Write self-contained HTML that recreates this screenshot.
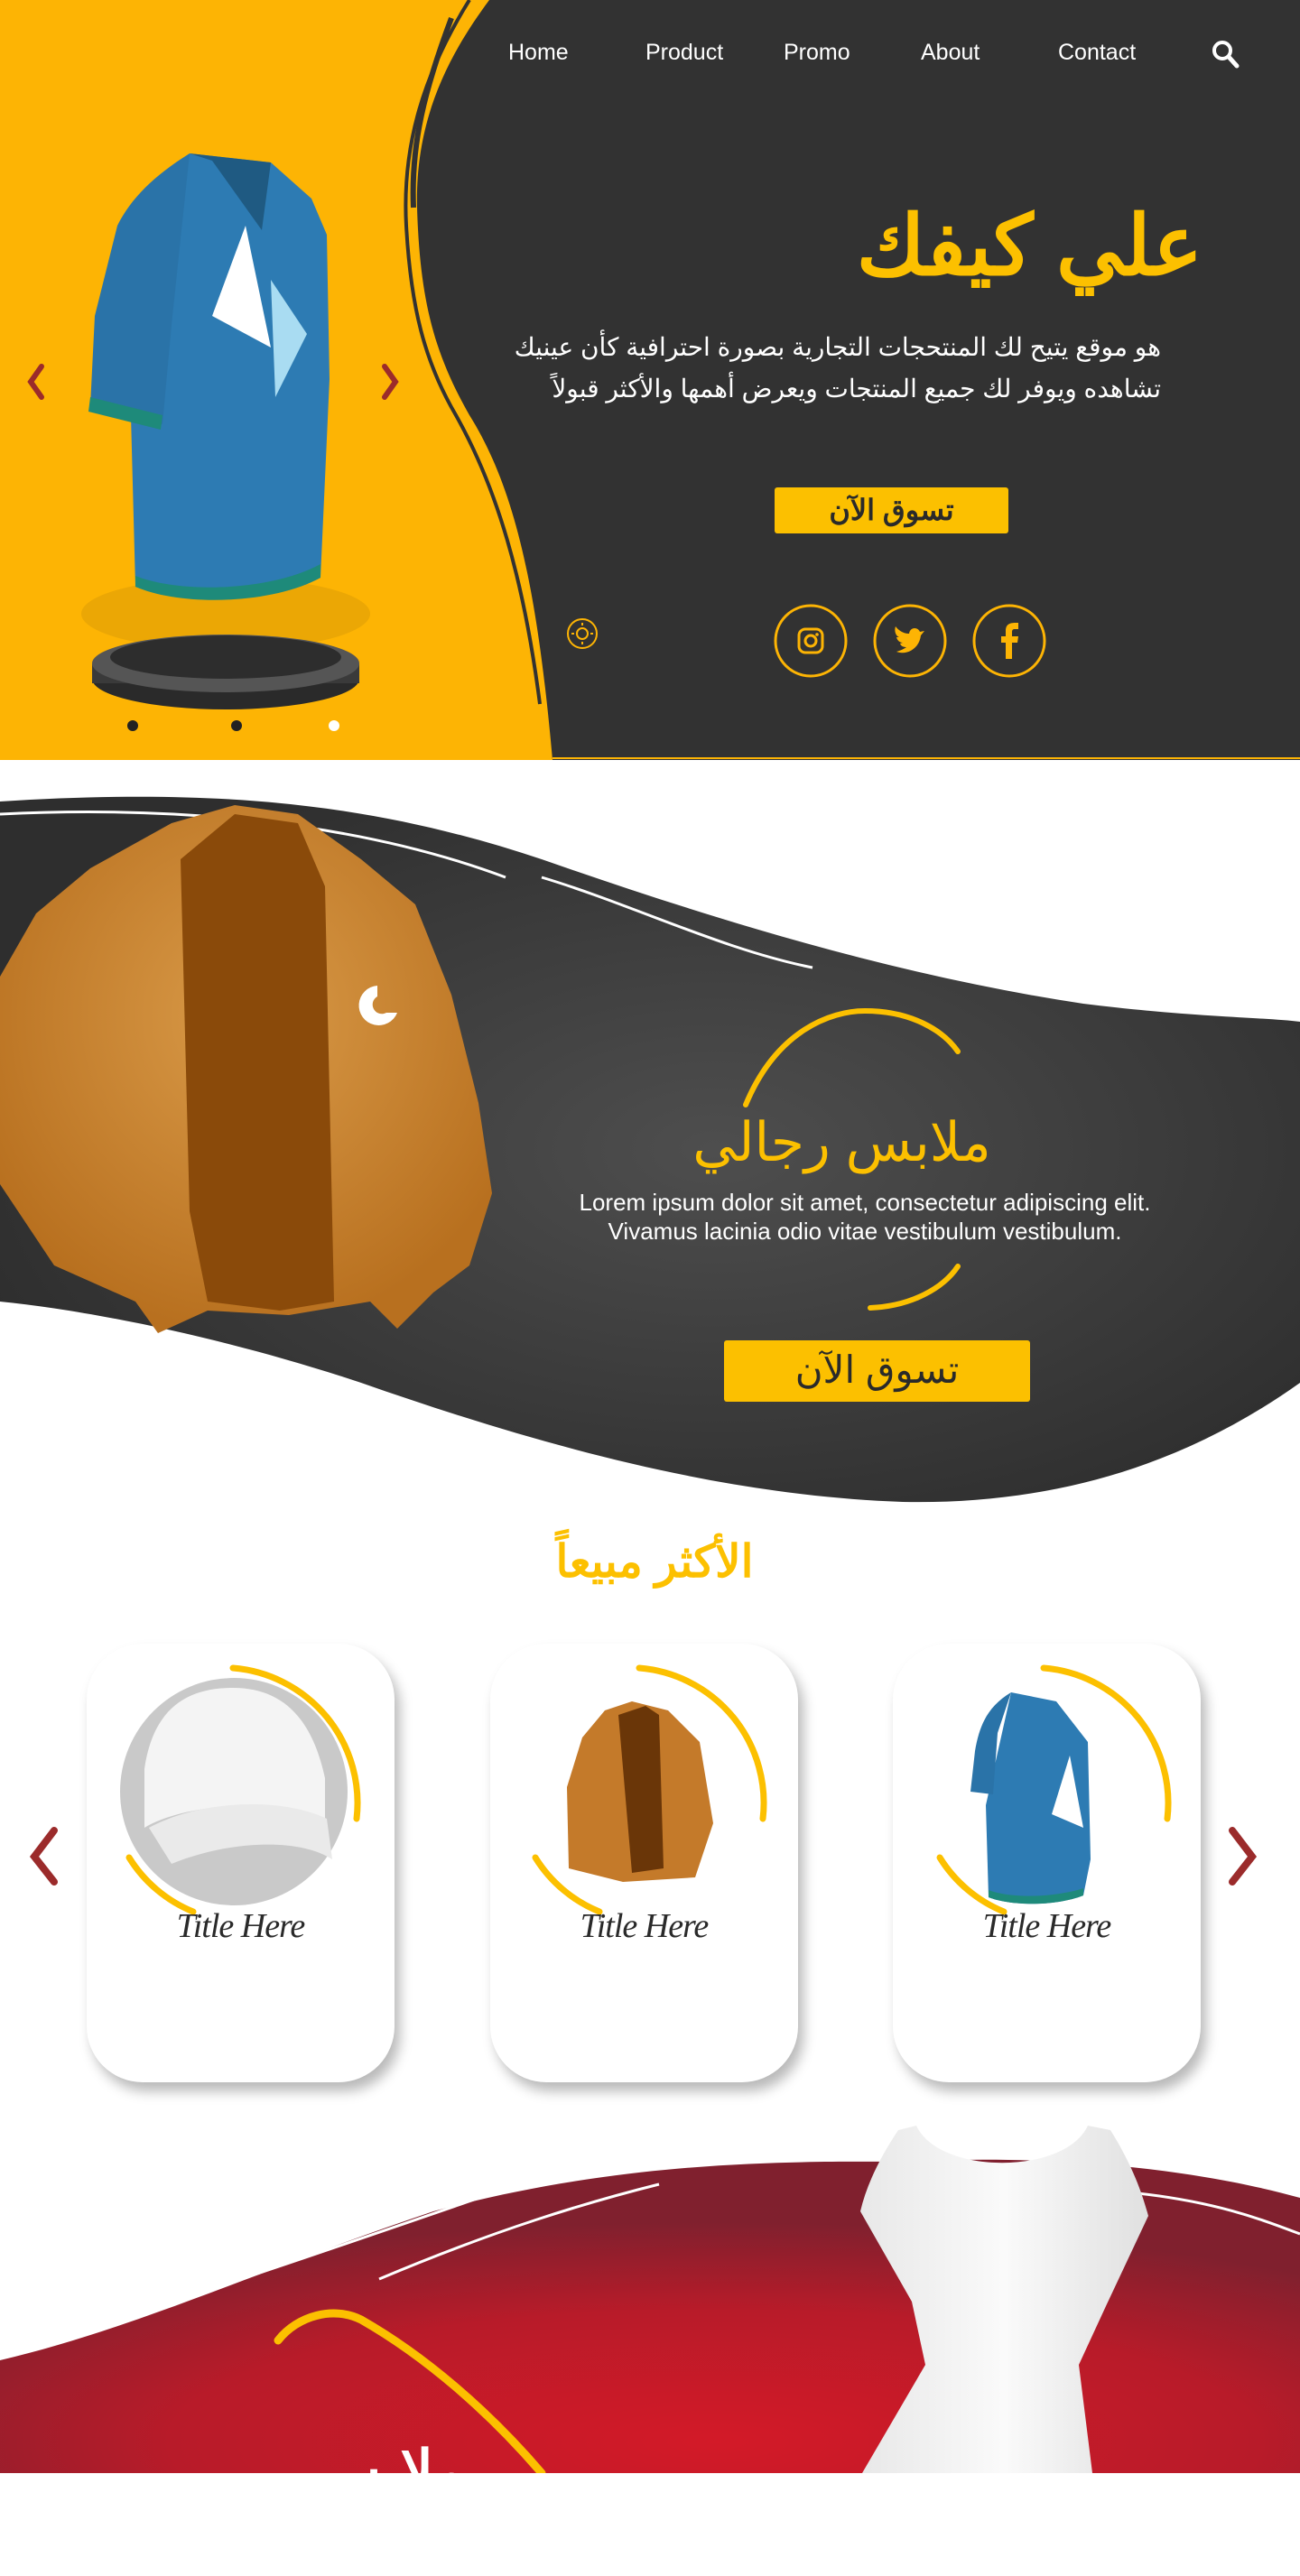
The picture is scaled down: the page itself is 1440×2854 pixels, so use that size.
<!DOCTYPE html>
<html><head><meta charset="utf-8"><style>
*{margin:0;padding:0;box-sizing:border-box}
body{width:1440px;height:2740px;position:relative;overflow:hidden;background:#fff;font-family:"Liberation Sans","Noto Sans CJK SC",sans-serif}
.a{position:absolute}
.nav{position:absolute;top:44px;color:#fff;font-size:25px;font-family:"Liberation Sans",sans-serif}
.ar{font-family:"Liberation Sans","Noto Sans CJK SC",sans-serif;direction:rtl}
.card{position:absolute;top:1821px;width:341px;height:486px;background:#fff;border-radius:62px;box-shadow:6px 10px 14px rgba(0,0,0,.28)}
.tt{position:absolute;top:2112px;width:341px;text-align:center;font-family:"Liberation Serif",serif;font-style:italic;font-size:38px;color:#2a2a2a;letter-spacing:-1px}
</style></head><body>

<!-- HERO -->
<svg class="a" style="left:0;top:0" width="1440" height="842">
<rect width="1440" height="842" fill="#FDB404"/>
<path d="M542 0 C490 70 460 140 462 230 C465 330 480 390 520 460 C570 540 595 650 612 842 L1440 842 L1440 0 Z" fill="#323232"/>
<path d="M520 0 C470 80 445 160 450 250 C455 340 470 400 505 460 C550 540 580 640 598 780" stroke="#323232" stroke-width="4" fill="none"/>
<path d="M500 20 C470 100 455 160 458 230" stroke="#323232" stroke-width="6" fill="none"/>
<line x1="612" y1="840" x2="1440" y2="840" stroke="#FDB404" stroke-width="2"/>
<!-- platform -->
<ellipse cx="250" cy="680" rx="160" ry="40" fill="#d99a05" opacity=".5"/>
<ellipse cx="250" cy="752" rx="148" ry="34" fill="#2a2a2a"/>
<rect x="102" y="735" width="296" height="22" fill="#3a3a3a"/>
<ellipse cx="250" cy="735" rx="148" ry="32" fill="#555"/>
<ellipse cx="250" cy="728" rx="128" ry="24" fill="#2d2d2d"/>
<!-- tshirt -->
<path d="M210 170 L300 180 L345 220 L362 260 L365 420 L355 640 C300 670 200 670 150 650 L145 460 L150 330 L150 280 Z" fill="#2d7bb3"/>
<path d="M210 170 C170 195 145 220 130 250 L105 350 L100 450 L180 470 L190 360 Z" fill="#2a73a8"/>
<path d="M100 440 L180 460 L178 476 L98 456 Z" fill="#1e8a7a"/>
<path d="M210 170 L235 178 L290 255 L300 180 Z" fill="#1f5a82"/>
<path d="M150 650 C200 672 300 670 355 640 L355 625 C300 655 200 658 150 638 Z" fill="#1e8a7a"/>
<path d="M272 250 L235 350 L300 385 Z" fill="#fff"/>
<path d="M300 310 L340 370 L305 440 Z" fill="#a9dcf2"/>
<!-- arrows -->
<path d="M46 406 L34 423 L46 440" stroke="#9b2b2b" stroke-width="6" fill="none" stroke-linecap="round"/>
<path d="M426 406 L438 423 L426 440" stroke="#9b2b2b" stroke-width="6" fill="none" stroke-linecap="round"/>
<circle cx="147" cy="804" r="6" fill="#222"/><circle cx="262" cy="804" r="6" fill="#222"/><circle cx="370" cy="804" r="6" fill="#fff"/>
<!-- sun -->
<circle cx="645" cy="702" r="16" fill="none" stroke="#FDB404" stroke-width="2"/>
<circle cx="645" cy="702" r="6" fill="none" stroke="#FDB404" stroke-width="2"/>
<g stroke="#FDB404" stroke-width="2"><line x1="645" y1="690" x2="645" y2="693"/><line x1="645" y1="711" x2="645" y2="714"/><line x1="633" y1="702" x2="636" y2="702"/><line x1="654" y1="702" x2="657" y2="702"/></g>
<!-- socials -->
<g fill="none" stroke="#FDB404" stroke-width="3"><circle cx="898" cy="710" r="39"/><circle cx="1008" cy="710" r="39"/><circle cx="1118" cy="710" r="39"/></g>
<rect x="885" y="697" width="26" height="26" rx="7" fill="none" stroke="#FDB404" stroke-width="3"/>
<circle cx="898" cy="710" r="6" fill="none" stroke="#FDB404" stroke-width="3"/><circle cx="905" cy="703" r="1.8" fill="#FDB404"/>
<path d="M993 722 C1003 726 1018 720 1020 704 L1024 699 L1019 700 C1016 694 1008 695 1007 702 C1000 702 995 698 992 694 C990 700 993 705 996 706 L993 706 C994 710 997 712 1000 712 L997 713 C998 716 1001 717 1004 717 C1000 720 996 721 993 722 Z" fill="#FDB404"/>
<path d="M1114 730 L1114 712 L1109 712 L1109 705 L1114 705 L1114 699 C1114 692 1118 690 1125 690 L1128 690 L1128 697 L1124 697 C1122 697 1121 698 1121 700 L1121 705 L1128 705 L1127 712 L1121 712 L1121 730 Z" fill="#FDB404"/>
<!-- search -->
<circle cx="1354" cy="56" r="9" fill="none" stroke="#fff" stroke-width="4"/>
<line x1="1361" y1="63" x2="1370" y2="73" stroke="#fff" stroke-width="5" stroke-linecap="round"/>
</svg>
<div class="nav" style="left:563px">Home</div>
<div class="nav" style="left:715px">Product</div>
<div class="nav" style="left:868px">Promo</div>
<div class="nav" style="left:1020px">About</div>
<div class="nav" style="left:1172px">Contact</div>
<div class="a ar" style="right:108px;top:218px;font-size:92px;font-weight:bold;color:#FCC000;line-height:1.2">علي كيفك</div>
<div class="a ar" style="right:154px;top:362px;font-size:28px;color:#fff;line-height:46px;text-align:right;white-space:nowrap">هو موقع يتيح لك المنتحجات التجارية بصورة احترافية كأن عينيك<br>تشاهده ويوفر لك جميع المنتجات ويعرض أهمها والأكثر قبولاً</div>
<div class="a ar" style="left:858px;top:540px;width:259px;height:51px;background:#FCC000;border-radius:3px;text-align:center;font-size:32px;font-weight:bold;color:#2a2a2a;line-height:50px">تسوق الآن</div>

<!-- SECTION 2 -->
<svg class="a" style="left:0;top:842px" width="1440" height="900">
<defs><radialGradient id="g2" cx="0.55" cy="0.5" r="0.6"><stop offset="0" stop-color="#4e4e4e"/><stop offset="1" stop-color="#2e2e2e"/></radialGradient>
<radialGradient id="jk" cx="0.5" cy="0.4" r="0.6"><stop offset="0" stop-color="#d99a48"/><stop offset="1" stop-color="#b8701f"/></radialGradient></defs>
<path d="M0 46 C250 30 420 50 600 110 C800 180 1000 240 1200 270 C1320 285 1400 285 1440 290 L1440 690 C1300 790 1150 825 1000 822 C800 815 600 760 400 690 C250 640 100 610 0 600 Z" fill="url(#g2)"/>
<g stroke="#fff" fill="none" stroke-width="3"><path d="M0 60 C200 50 400 70 560 130"/><path d="M600 130 C700 160 800 210 900 230"/><path d="M360 760 C500 800 700 850 900 852"/><path d="M1000 840 C1200 830 1350 770 1440 700"/><path d="M0 620 C100 630 200 650 300 690"/></g>
<!-- jacket -->
<path d="M190 70 L260 50 L330 60 L400 110 L460 160 L500 260 L530 380 L545 480 L520 560 L480 590 L440 630 L410 600 L320 615 L230 610 L175 635 L150 600 L60 560 L20 500 L0 470 L0 240 L40 170 L100 120 Z" fill="url(#jk)"/>
<path d="M200 110 L260 60 L330 70 L360 140 L370 600 L310 610 L230 600 L210 500 Z" fill="#8a4a0a"/>
<path d="M418 250 A22 22 0 1 0 440 280 L428 280 A10 10 0 1 1 418 262 Z" fill="#fff"/>
<!-- arcs -->
<path d="M826 382 C860 300 920 278 958 278 C1010 278 1045 300 1061 323" stroke="#FCC000" stroke-width="6" fill="none" stroke-linecap="round"/>
<path d="M1061 561 C1045 585 1010 605 964 607" stroke="#FCC000" stroke-width="6" fill="none" stroke-linecap="round"/>
</svg>
<div class="a ar" style="left:700px;top:1230px;width:465px;text-align:center;font-size:60px;color:#FCC000;line-height:1.2">ملابس رجالي</div>
<div class="a" style="left:558px;top:1316px;width:800px;text-align:center;font-size:26px;color:#fff;line-height:32px">Lorem ipsum dolor sit amet, consectetur adipiscing elit.<br>Vivamus lacinia odio vitae vestibulum vestibulum.</div>
<div class="a ar" style="left:802px;top:1485px;width:339px;height:68px;background:#FCC000;border-radius:3px;text-align:center;font-size:42px;color:#2a2a2a;line-height:66px">تسوق الآن</div>

<!-- SECTION 3 -->
<div class="a ar" style="left:500px;top:1700px;width:450px;text-align:center;font-size:50px;font-weight:bold;color:#FCC000;line-height:1.2">الأكثر مبيعاً</div>
<div class="card" style="left:96px"></div>
<div class="card" style="left:543px"></div>
<div class="card" style="left:989px"></div>
<svg class="a" style="left:0;top:1800px" width="1440" height="400">
<g stroke="#9b2b2b" stroke-width="8" fill="none" stroke-linecap="round"><path d="M60 228 L38 257 L60 285"/><path d="M1365 228 L1387 257 L1365 285"/></g>
<!-- cap -->
<circle cx="259" cy="185" r="126" fill="#c9c9c9"/>
<path d="M160 160 C170 90 210 70 258 70 C310 70 345 100 360 170 L360 215 C300 190 200 200 160 225 Z" fill="#f4f4f4"/>
<path d="M165 225 C220 195 310 190 362 215 L368 260 C330 235 250 240 190 265 Z" fill="#eaeaea"/>
<!-- jacket small -->
<path d="M670 95 L700 85 L740 95 L775 130 L790 220 L770 280 L690 285 L630 270 L628 180 L645 125 Z" fill="#c47a2a"/>
<path d="M685 100 L715 90 L730 100 L735 270 L700 275 Z" fill="#6a3608"/>
<!-- tshirt small -->
<path d="M1120 75 L1170 85 L1205 130 L1208 260 L1200 300 C1170 312 1120 312 1095 302 L1092 200 Z" fill="#2d7bb3"/>
<path d="M1120 75 C1095 90 1085 110 1080 140 L1075 185 L1100 188 L1105 120 Z" fill="#2a73a8"/>
<path d="M1185 145 L1165 210 L1200 225 Z" fill="#fff"/>
<path d="M1095 302 C1120 312 1170 312 1200 300 L1200 292 C1170 302 1120 304 1095 294 Z" fill="#1e8a7a"/>
<g stroke="#FCC000" stroke-width="7" fill="none" stroke-linecap="round">
<path d="M258 48 A150 150 0 0 1 395 215"/><path d="M143 258 A150 150 0 0 0 214 318"/>
<path d="M708 48 A150 150 0 0 1 845 215"/><path d="M593 258 A150 150 0 0 0 664 318"/>
<path d="M1156 48 A150 150 0 0 1 1293 215"/><path d="M1041 258 A150 150 0 0 0 1112 318"/>
</g>
</svg>
<div class="tt" style="left:96px">Title Here</div>
<div class="tt" style="left:543px">Title Here</div>
<div class="tt" style="left:989px">Title Here</div>

<!-- SECTION 4 -->
<svg class="a" style="left:0;top:2340px" width="1440" height="400">
<defs><radialGradient id="rg" cx="0.55" cy="0.9" r="0.7"><stop offset="0" stop-color="#d31a28"/><stop offset="0.6" stop-color="#b81b29"/><stop offset="1" stop-color="#80202e"/></radialGradient>
<linearGradient id="dr" x1="0" x2="1"><stop offset="0" stop-color="#e8e8e8"/><stop offset=".5" stop-color="#fafafa"/><stop offset="1" stop-color="#e0e0e0"/></linearGradient></defs>
<path d="M0 275 C150 240 300 170 480 110 C700 50 900 55 1000 55 C1200 45 1350 70 1440 95 L1440 400 L0 400 Z" fill="url(#rg)"/>
<g stroke="#fff" fill="none" stroke-width="3"><path d="M60 250 C200 210 400 140 560 85"/><path d="M420 185 C550 130 650 100 730 80"/><path d="M1260 90 C1350 100 1400 120 1440 135"/></g>
<path d="M308 253 C330 225 370 215 400 230 C470 270 540 330 600 400" stroke="#FCC000" stroke-width="9" fill="none" stroke-linecap="round"/>
<path d="M1015 15 C1040 70 1180 70 1205 15 L1230 20 C1255 60 1265 90 1272 115 L1225 215 L1195 280 L1210 400 L955 400 L1025 280 L1010 210 L953 110 C960 80 975 50 995 20 Z" fill="url(#dr)"/>
</svg>
<div class="a ar" style="left:250px;top:2700px;width:360px;text-align:center;font-size:64px;font-weight:bold;color:#fff;line-height:1.2">ملابس حريمي</div>
</body></html>
